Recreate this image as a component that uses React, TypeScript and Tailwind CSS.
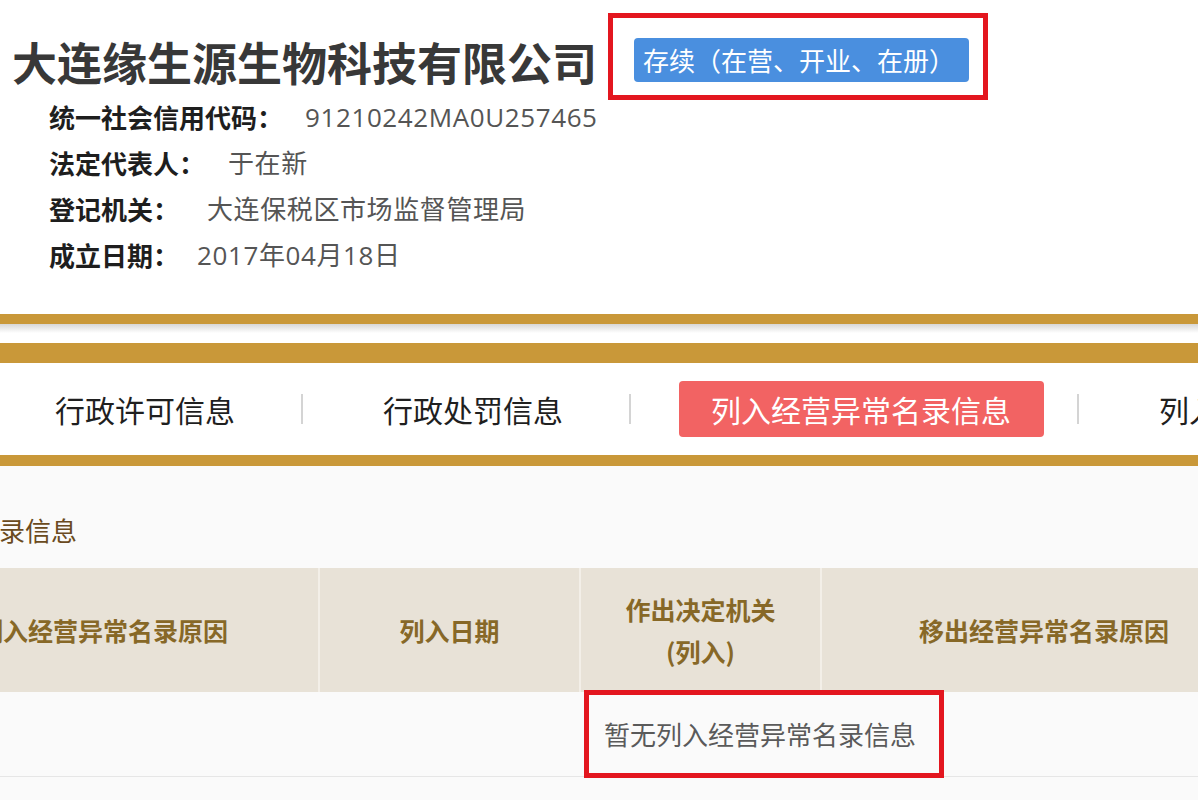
import React from "react";

const cjk = "font-['Noto_Sans_CJK_SC',sans-serif]";
const latin = "font-['Open_Sans','Noto_Sans_CJK_SC',sans-serif]";

interface InfoRowProps {
    label: string;
    value: string;
    gap: string;
}

const InfoRow: React.FC<InfoRowProps> = ({label, value, gap}) => (
    <div className="flex flex-row items-center h-[46px]">
        <span className="text-[26px] font-bold text-[#1e1e1e] leading-none">{label}</span>
        <span className={`text-[26px] text-[#555] leading-none tracking-[0.6px] ${latin} ${gap}`}>{value}</span>
    </div>
);

const Separator = () => (
    <div className="w-[2px] h-[30px] bg-[#d4d4d4] ml-[33px] mr-[48px] shrink-0" />
);

const tabs = ["行政许可信息", "行政处罚信息", "列入经营异常名录信息", "列入严重违法失信企业名单信息"];

const App: React.FC = () => {
    const activeTab = 2;

    return (
        <div className={`w-[1198px] h-[800px] overflow-hidden bg-white ${cjk}`}>
            {/* header */}
            <div className="pt-[13px] bg-white">
                <div className="flex flex-row items-start h-[81px] pl-[12px]">
                    <h1 className="text-[45px] font-bold text-[#383838] leading-[45px] mt-[26px] whitespace-nowrap">大连缘生源生物科技有限公司</h1>
                    <div className="ml-[11px] border-[5px] border-[#e3161f] pt-[20px] pb-[13px] pl-[21px] pr-[14px] shrink-0">
                        <div className="bg-[#4a8fdf] rounded-[4px] h-[44px] flex items-center pl-[9px] pr-[14px] text-white text-[26px] leading-none whitespace-nowrap">
                            存续（在营、开业、在册）
                        </div>
                    </div>
                </div>
                <div className="pl-[49px]">
                    <InfoRow label="统一社会信用代码：" value="91210242MA0U257465" gap="ml-[22px]" />
                    <InfoRow label="法定代表人：" value="于在新" gap="ml-[23px]" />
                    <InfoRow label="登记机关：" value="大连保税区市场监督管理局" gap="ml-[28px]" />
                    <InfoRow label="成立日期：" value="2017年04月18日" gap="ml-[18px]" />
                </div>
            </div>

            {/* gold bars + tabs */}
            <div className="mt-[36px]">
                <div className="h-[10px] bg-[#c99839]" />
                <div className="h-[9px] bg-gradient-to-b from-[#d6d6d6] to-white" />
                <div className="h-[10px] bg-white" />
                <div className="h-[20px] bg-[#c99839]" />
                <div className="h-[92px] bg-white flex flex-row items-center pl-[23px] whitespace-nowrap">
                    {tabs.map((tab, i) => (
                        <React.Fragment key={tab}>
                            {i > 0 && <Separator />}
                            <div
                                className={
                                    i === activeTab
                                        ? "h-[56px] px-[32px] pr-[33px] flex items-center rounded-[4px] bg-[#f26363] text-white text-[30px] leading-none shrink-0"
                                        : "h-[56px] px-[32px] pr-[33px] flex items-center text-[#1f1f1f] text-[30px] leading-none shrink-0"
                                }
                            >
                                {tab}
                            </div>
                        </React.Fragment>
                    ))}
                </div>
                <div className="h-[11px] bg-[#c99839]" />
            </div>

            {/* lower content */}
            <div className="bg-[#fafafa] h-[400px] pt-[51px]">
                <div className="text-[26px] leading-[26px] text-[#6a4a20] ml-[-183px] whitespace-nowrap">列入经营异常名录信息</div>
                <div className="mt-[25px] ml-[-112px] w-[1378px]">
                    <div className="flex flex-row h-[124px] bg-[#e8e2d7] text-[25px] font-bold text-[#876827] text-center leading-[42px]">
                        <div className="w-[432px] flex items-center justify-center border-r-2 border-[#f3efe8]">列入经营异常名录原因</div>
                        <div className="w-[261px] flex items-center justify-center border-r-2 border-[#f3efe8]">列入日期</div>
                        <div className="w-[241px] flex items-center justify-center border-r-2 border-[#f3efe8]">作出决定机关<br />(列入)</div>
                        <div className="w-[444px] flex items-center justify-center">移出经营异常名录原因</div>
                    </div>
                    <div className="flex flex-row h-[85px] border-b border-[#e6e6e6]">
                        <div className="ml-[696px] mt-[-2px] h-[88px] border-[5px] border-[#e3161f] flex items-center pl-[15px] pr-[23px] text-[26px] text-[#5a5a5a] leading-none whitespace-nowrap">
                            暂无列入经营异常名录信息
                        </div>
                    </div>
                </div>
            </div>
        </div>
    );
};

export default App;
